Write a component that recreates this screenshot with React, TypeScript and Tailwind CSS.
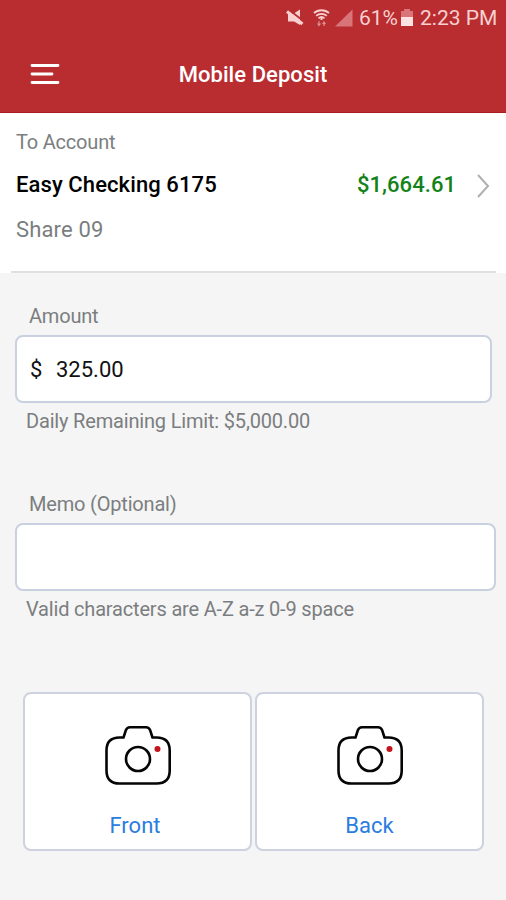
import type { ReactNode } from 'react';

const StatusBar = () => {
    return (
        <div className="flex h-9 items-center justify-end pr-[9px] text-[#f8d0d0]">
            {/* Muted */}
            <svg width="18" height="18" viewBox="0 0 18 18" className="mr-[9px]">
                <path d="M2 5h5l7-4.500v15.500L8 12.500H2z" fill="#f8d0d0" />
                <path d="M2.500 .5L18 12.500" stroke="#b92d31" strokeWidth="1.800" />
                <path d="M1 2.500l15.500 12.500" stroke="#f8d0d0" strokeWidth="3" />
            </svg>
            {/* Wifi */}
            <svg width="17" height="18" viewBox="0 0 17 18" className="mr-[5px]" fill="none" stroke="#f8d0d0">
                <path d="M1 4C5 .3 12 .3 16 4" strokeWidth="1.800" />
                <path d="M3.200 6.800C6 4.300 11 4.300 13.800 6.800" strokeWidth="1.800" />
                <path d="M5.500 9.300C7.200 7.800 9.800 7.800 11.500 9.300" strokeWidth="1.800" />
                <path d="M8.500 8.500v2.500" strokeWidth="2" />
                <path d="M6 12v4M4.500 14.500L6 16.500l1.500-2M11 17v-4M9.500 15L11 13l1.500 2" strokeWidth="1.200" opacity=".6" />
            </svg>
            {/* Signal */}
            <svg width="18" height="18" viewBox="0 0 18 18" className="mr-[6px]">
                <path d="M17.500 .5v17H0z" fill="#d97478" />
            </svg>
            <span className="w-[40px] whitespace-nowrap text-[21px] leading-9">61%</span>
            {/* Battery */}
            <svg width="12" height="18" viewBox="0 0 12 18" className="mr-[7px] ml-[2px]">
                <path d="M3 0h6v2h3v6H0V2h3z" fill="#d97478" />
                <path d="M0 8h12v9H0z" fill="#fbe3e3" />
            </svg>
            <span className="w-[77px] whitespace-nowrap text-[21px] leading-9">2:23 PM</span>
        </div>
    );
};

const Header = () => {
    return (
        <header className="h-[113px] border-b border-[#a81d22] bg-[#b92d31]">
            <StatusBar />
            <div className="grid h-[77px] grid-cols-[1fr_auto_1fr] items-center">
                <button className="-mt-0.5 ml-[30px] w-8">
                    <svg width="30" height="22" viewBox="0 0 30 22" stroke="#fff" strokeWidth="2.800" strokeLinecap="round">
                        <path d="M2 2.500h26M2 11h20M2 19.500h26" />
                    </svg>
                </button>
                <h1 className="text-[22px] leading-7 font-medium tracking-[0.06px] text-white">Mobile Deposit</h1>
            </div>
        </header>
    );
};

const Account = () => {
    return (
        <section className="h-[160px] bg-white">
            <p className="px-4 pt-[15px] text-[20px] leading-7 tracking-[-0.2px] text-[#7b7e80]">To Account</p>
            <div className="mt-[14px] flex items-center pr-4 pl-4 leading-7">
                <span className="mt-px text-[22px] font-medium tracking-[0.1px] text-black">Easy Checking 6175</span>
                <span className="mt-px ml-auto text-[22px] font-medium tracking-[0.05px] text-[#138218]">$1,664.61</span>
                <svg width="14" height="24" viewBox="0 0 14 24" className="mt-0.5 ml-5" fill="none" stroke="#b0b0b0" strokeWidth="2">
                    <path d="M2 1l10 11L2 23" />
                </svg>
            </div>
            <p className="mt-[17px] px-4 text-[22px] leading-7 tracking-[0.15px] text-[#7b7e80]">Share 09</p>
            <div className="mr-[10px] mt-[27px] ml-[11px] h-0.5 bg-[#e0e0e0]" />
        </section>
    );
};

const CameraIcon = () => {
    return (
        <svg width="66" height="60" viewBox="0 0 66 60" fill="none" stroke="#050505" strokeWidth="2.600" strokeLinejoin="round">
            <path d="M18.500 12.500L20.800 5.300Q22 2.200 25 2.200H41Q44 2.200 45.200 5.300L47.500 12.500H51.500Q64.700 12.500 64.700 25.500V45.500Q64.700 58.500 51.500 58.500H14.500Q1.500 58.500 1.500 45.500V25.500Q1.500 12.500 14.500 12.500Z" />
            <circle cx="33" cy="34" r="12" />
            <circle cx="52.500" cy="24" r="3" fill="#c3141b" stroke="none" />
        </svg>
    );
};

const Field = ({ label, hint, children }: { label: string; hint: string; children: ReactNode }) => {
    return (
        <div className="h-[188px]">
            <label className="block pl-[29px] text-[20px] leading-7 tracking-[-0.19px] text-[#7b7e80]">{label}</label>
            {children}
            <p className="mt-[4px] pl-[26px] text-[20px] leading-7 tracking-[-0.18px] text-[#7b7e80]">{hint}</p>
        </div>
    );
};

const photos = ['Front', 'Back'];

const App = () => {
    return (
        <div className="h-[900px] w-[506px] overflow-hidden bg-[#f5f5f5] font-['Roboto','Liberation_Sans',sans-serif]">
            <Header />
            <Account />
            <main className="pt-[29px]">
                <Field label="Amount" hint="Daily Remaining Limit: $5,000.00">
                    <div className="mt-[5px] mr-3.5 ml-[15px] flex h-[68px] items-center rounded-[8px] border-2 border-[#c9d1e1] bg-white pl-[13px] text-[22px] text-[#111]">
                        <span className="w-[26px]">$</span>
                        <span>325.00</span>
                    </div>
                </Field>
                <Field label="Memo (Optional)" hint="Valid characters are A-Z a-z 0-9 space">
                    <div className="mt-[5px] mr-2.5 ml-[15px] h-[68px] rounded-[8px] border-2 border-[#c9d1e1] bg-white" />
                </Field>
                <div className="mt-[14px] flex gap-[3px] pl-[23px]">
                    {photos.map((photo) => (
                        <button
                            key={photo}
                            className="group flex h-[159px] w-[229px] flex-col items-center rounded-[8px] border-2 border-[#cdd1e0] bg-white pt-[31px]"
                        >
                            <CameraIcon />
                            <span className="mt-[27px] text-[22px] leading-7 text-[#2b7de0] group-first:pr-[5px]">{photo}</span>
                        </button>
                    ))}
                </div>
            </main>
        </div>
    );
};

export default App;
